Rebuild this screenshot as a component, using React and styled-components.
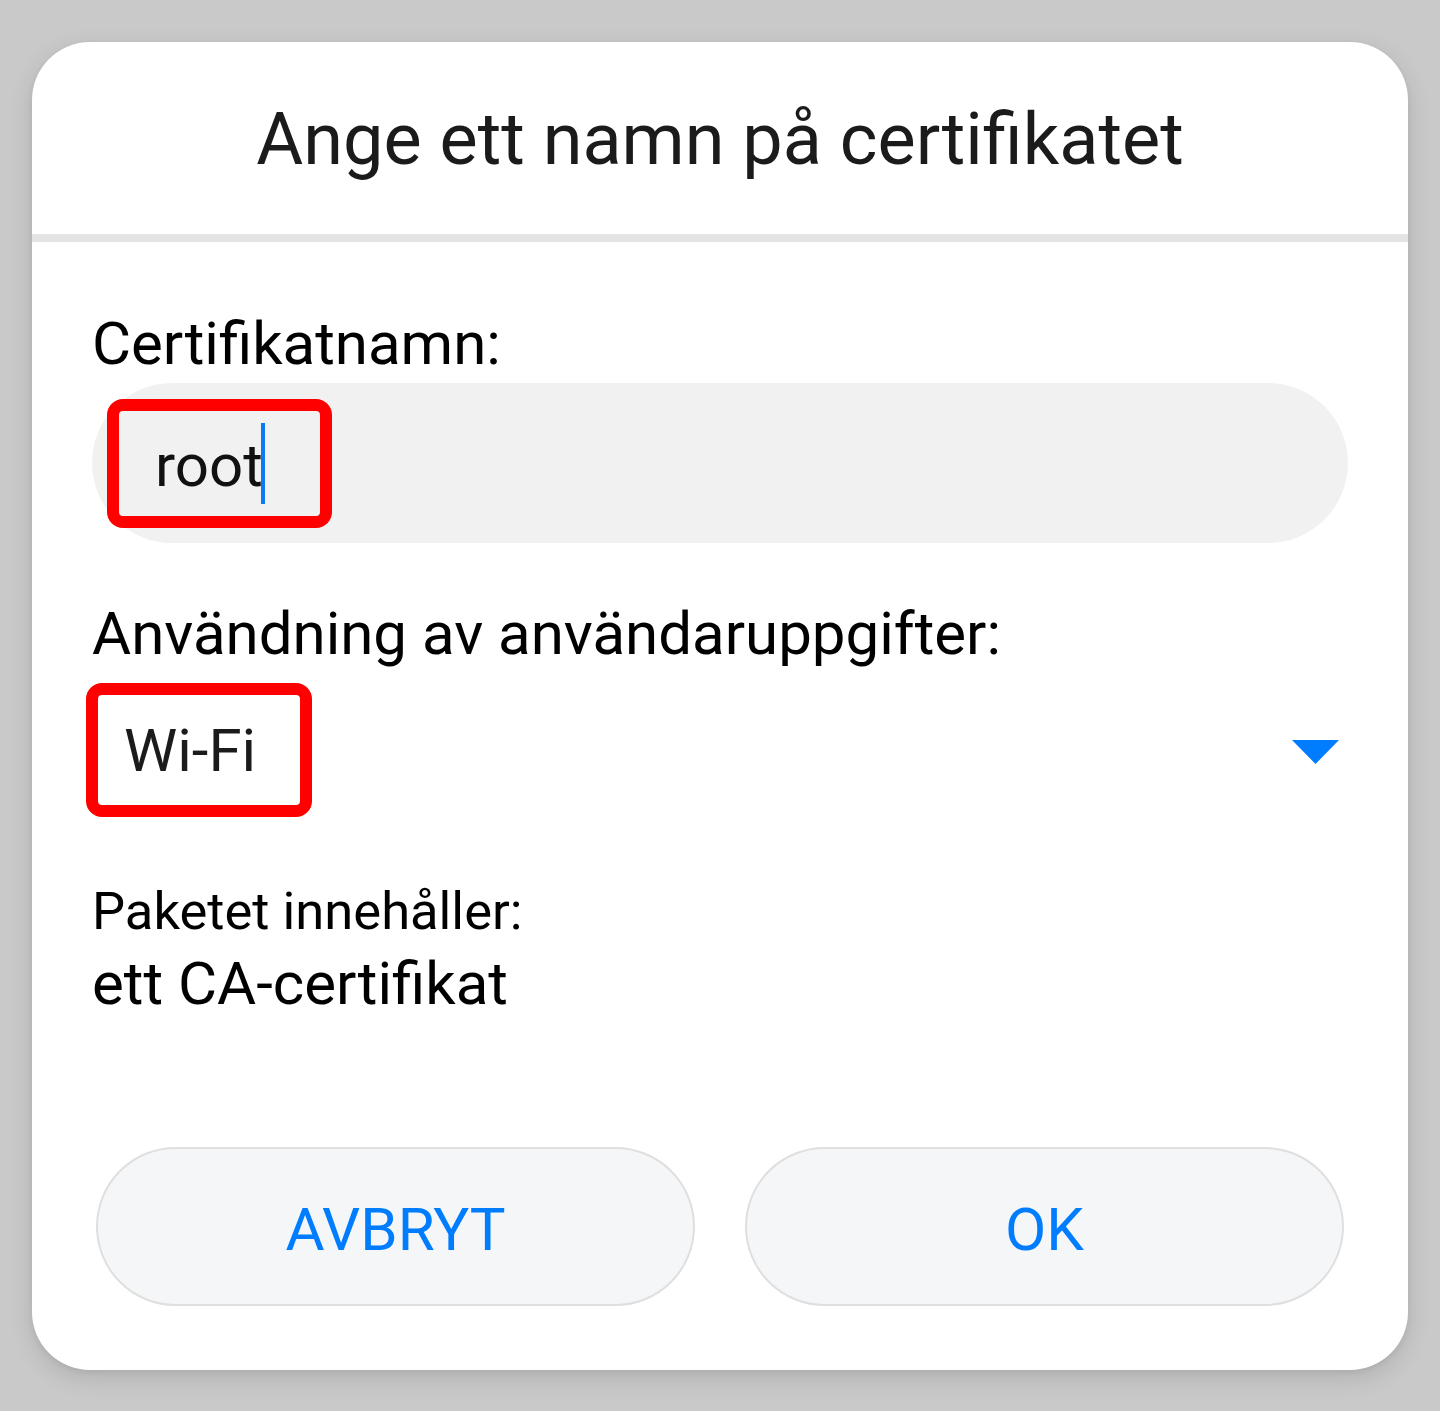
import React from "react";
import styled, { createGlobalStyle } from "styled-components";

const GlobalStyle = createGlobalStyle`
  html, body {
    margin: 0;
    padding: 0;
    background: #c9c9c9;
  }
  body {
    font-family: Roboto, "Noto Sans", "Liberation Sans", sans-serif;
    -webkit-font-smoothing: antialiased;
  }
`;

const Screen = styled.div`
  width: 1440px;
  height: 1411px;
  box-sizing: border-box;
  padding: 42px 32px 41px;
  background: #c9c9c9;
`;

const Dialog = styled.div`
  background: #ffffff;
  border-radius: 58px;
  box-shadow: 0 8px 24px rgba(0, 0, 0, 0.12), 0 2px 6px rgba(0, 0, 0, 0.06);
  display: flex;
  flex-direction: column;
  overflow: hidden;
`;

const Header = styled.div`
  height: 192px;
  display: flex;
  align-items: center;
  justify-content: center;
  border-bottom: 8px solid #e4e4e4;
`;

const Title = styled.h1`
  margin: 0;
  font-size: 72px;
  font-weight: 400;
  line-height: 84px;
  color: #1b1b1b;
  letter-spacing: 0;
  padding-top: 4px;
`;

const Body = styled.div`
  display: flex;
  flex-direction: column;
  padding: 67px 60px 64px;
`;

const Label = styled.div`
  font-size: ${(p) => p.$size || 60}px;
  line-height: ${(p) => p.$lh || 70}px;
  color: #000;
  margin-top: ${(p) => p.$mt || 0}px;
`;

const Field = styled.div`
  position: relative;
  margin-top: 4px;
  height: 160px;
  border-radius: 80px;
  background: #f1f1f1;
  display: flex;
  align-items: center;
  padding-left: 63px;
`;

const FieldText = styled.span`
  font-size: 60px;
  line-height: 70px;
  color: #111;
  padding-top: 6px;
`;

const Caret = styled.span`
  display: inline-block;
  width: 4px;
  height: 81px;
  background: #0a7cf0;
  margin-left: -2px;
`;

const Highlight = styled.div`
  position: absolute;
  left: ${(p) => p.$left}px;
  top: ${(p) => p.$top}px;
  width: ${(p) => p.$width}px;
  height: ${(p) => p.$height}px;
  box-sizing: border-box;
  border: 12px solid #ff0000;
  border-radius: 16px;
  pointer-events: none;
`;

const SelectRow = styled.div`
  position: relative;
  margin-top: 14px;
  height: 134px;
  display: flex;
  align-items: center;
  justify-content: space-between;
  padding-left: 32px;
  padding-right: 9px;
`;

const SelectText = styled.span`
  font-size: 60px;
  line-height: 70px;
  color: #1b1b1b;
  padding-top: 2px;
`;

const Arrow = styled.svg`
  width: 47px;
  height: 24px;
  margin-top: 4px;
  display: block;
`;

const ButtonRow = styled.div`
  margin-top: 128px;
  padding: 0 4px;
  display: grid;
  grid-template-columns: 1fr 1fr;
  gap: 50px;
`;

const Button = styled.button`
  height: 159px;
  border-radius: 80px;
  border: 2px solid #dfdfdf;
  background: #f5f6f7;
  color: #007dff;
  font-family: Roboto, "Noto Sans", "Liberation Sans", sans-serif;
  font-size: 60px;
  line-height: 70px;
  font-weight: 400;
  padding: 6px 0 0;
  cursor: pointer;
`;

export default function App() {
  return (
    <>
      <GlobalStyle />
      <Screen>
        <Dialog>
          <Header>
            <Title>Ange ett namn på certifikatet</Title>
          </Header>
          <Body>
            <Label>Certifikatnamn:</Label>
            <Field>
              <FieldText>root</FieldText>
              <Caret />
              <Highlight $left={15} $top={16} $width={225} $height={129} />
            </Field>
            <Label $mt={56}>Användning av användaruppgifter:</Label>
            <SelectRow>
              <SelectText>Wi-Fi</SelectText>
              <Arrow viewBox="0 0 47 24">
                <polygon points="0,0 47,0 23.5,24" fill="#007dff" />
              </Arrow>
              <Highlight $left={-6} $top={0} $width={226} $height={134} />
            </SelectRow>
            <Label $size={52.5} $lh={61} $mt={64}>
              Paketet innehåller:
            </Label>
            <Label $mt={7}>ett CA-certifikat</Label>
            <ButtonRow>
              <Button>AVBRYT</Button>
              <Button>OK</Button>
            </ButtonRow>
          </Body>
        </Dialog>
      </Screen>
    </>
  );
}
